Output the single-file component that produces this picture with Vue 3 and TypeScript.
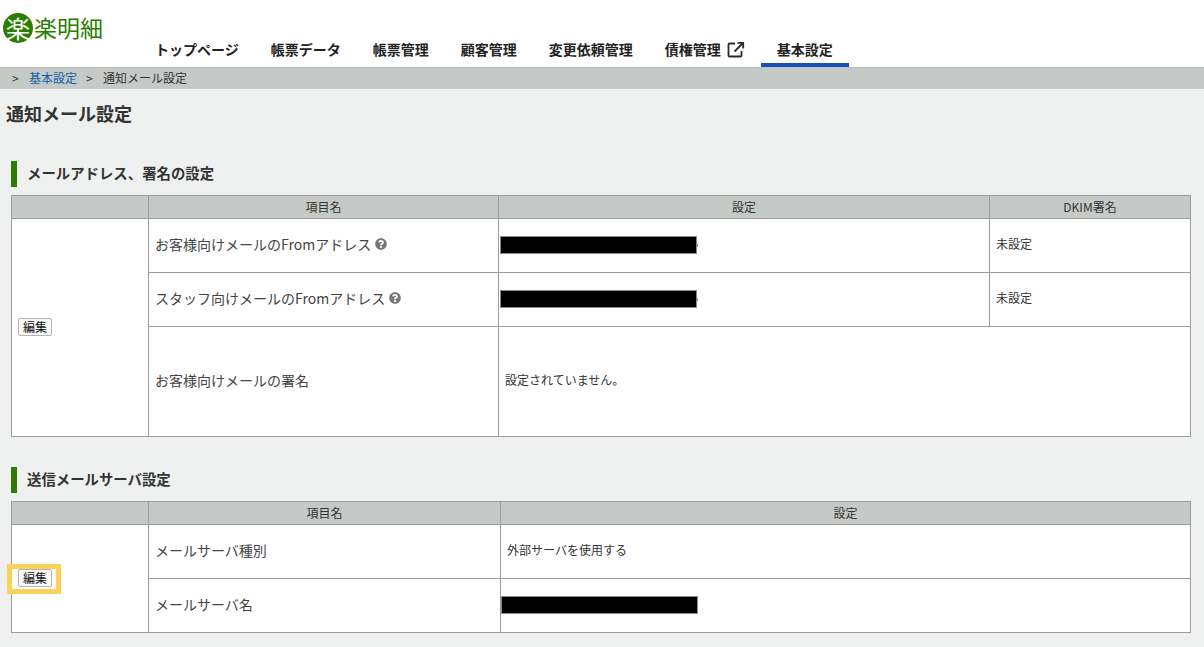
<script setup lang="ts">
const navItems: { label: string; external?: boolean; active?: boolean }[] = [
  { label: 'トップページ' },
  { label: '帳票データ' },
  { label: '帳票管理' },
  { label: '顧客管理' },
  { label: '変更依頼管理' },
  { label: '債権管理', external: true },
  { label: '基本設定', active: true },
]
const helpPath =
  'M504 256c0 137-111 248-248 248S8 393 8 256C8 119 119 8 256 8s248 111 248 248zM262.700 90c-54.500 0-89.300 23-116.600 63.800-3.500 5.300-2.400 12.400 2.700 16.200l34.700 26.300c5.200 3.900 12.600 3 16.700-2.100 17.900-22.700 30.100-35.800 57.300-35.800 20.400 0 45.700 13.100 45.700 33 0 15-12.400 22.700-32.500 34C247.100 238.500 216 254.900 216 296v4c0 6.600 5.400 12 12 12h56c6.600 0 12-5.400 12-12v-1.300c0-28.500 83.200-29.600 83.200-106.700 0-58-60.200-102-116.500-102zM256 338c-25.400 0-46 20.600-46 46s20.600 46 46 46 46-20.600 46-46-20.600-46-46-46z'
</script>

<template>
  <div class="page">
    <header class="header">
      <div class="logo">
        <span class="logo-mark">楽</span>
        <span class="logo-text">楽明細</span>
      </div>
      <nav class="nav">
        <a v-for="item in navItems" :key="item.label" class="nav-item" :class="{ active: item.active }">
          {{ item.label }}
          <svg v-if="item.external" class="ext" viewBox="0 0 18 18" fill="none" stroke="#2b2b2b" stroke-width="1.8">
            <path d="M8 2.500H2.500a1 1 0 0 0-1 1v11a1 1 0 0 0 1 1h11a1 1 0 0 0 1-1V10" />
            <path d="M7.500 10.500L15.500 2.500M10.500 1.800h5.700v5.700" />
          </svg>
        </a>
      </nav>
    </header>

    <div class="crumbs">
      <span class="sep">&gt;</span>
      <a class="crumb-link">基本設定</a>
      <span class="sep">&gt;</span>
      <span>通知メール設定</span>
    </div>

    <main class="main">
      <h1 class="title">通知メール設定</h1>

      <section class="section">
        <h2 class="heading">メールアドレス、署名の設定</h2>
        <table class="grid">
          <colgroup>
            <col class="c-action" />
            <col class="c-name" />
            <col class="c-value" />
            <col />
          </colgroup>
          <thead>
            <tr>
              <th></th>
              <th>項目名</th>
              <th>設定</th>
              <th>DKIM署名</th>
            </tr>
          </thead>
          <tbody>
            <tr class="row">
              <td rowspan="3" class="action"><button class="btn">編集</button></td>
              <td class="label">
                お客様向けメールのFromアドレス
                <svg class="help" viewBox="0 0 512 512"><path :d="helpPath" fill="#777" /></svg>
              </td>
              <td class="value masked"><span class="mask trail"></span></td>
              <td class="value">未設定</td>
            </tr>
            <tr class="row">
              <td class="label">
                スタッフ向けメールのFromアドレス
                <svg class="help" viewBox="0 0 512 512"><path :d="helpPath" fill="#777" /></svg>
              </td>
              <td class="value masked"><span class="mask trail"></span></td>
              <td class="value">未設定</td>
            </tr>
            <tr class="row-tall">
              <td class="label">お客様向けメールの署名</td>
              <td class="value" colspan="2">設定されていません。</td>
            </tr>
          </tbody>
        </table>
      </section>

      <section class="section">
        <h2 class="heading">送信メールサーバ設定</h2>
        <table class="grid">
          <colgroup>
            <col class="c-action" />
            <col class="c-name-wide" />
            <col />
          </colgroup>
          <thead>
            <tr>
              <th></th>
              <th>項目名</th>
              <th>設定</th>
            </tr>
          </thead>
          <tbody>
            <tr class="row">
              <td rowspan="2" class="action">
                <span class="marked">
                  <button class="btn">編集</button>
                  <span class="frame"></span>
                </span>
              </td>
              <td class="label">メールサーバ種別</td>
              <td class="value">外部サーバを使用する</td>
            </tr>
            <tr class="row">
              <td class="label">メールサーバ名</td>
              <td class="value masked"><span class="mask flush"></span></td>
            </tr>
          </tbody>
        </table>
      </section>
    </main>
  </div>
</template>

<style>
html,
body {
  margin: 0;
  background: #eff1f1;
}
</style>

<style scoped>
.page {
  font-family: 'Noto Sans CJK JP', 'Liberation Sans', sans-serif;
  color: #333;
  background: #eff1f1;
  height: 647px;
  overflow: hidden;
}
.header {
  position: relative;
  height: 67px;
  box-sizing: border-box;
  background: #fff;
  display: flex;
  align-items: flex-end;
  padding-left: 139px;
}
.logo {
  position: absolute;
  left: 3px;
  top: 13px;
  display: flex;
  align-items: center;
  gap: 1px;
  color: #2a7d00;
}
.logo-mark {
  width: 30px;
  height: 30px;
  border-radius: 50%;
  background: #2a7d00;
  color: #fff;
  font-size: 24px;
  line-height: 30px;
  text-align: center;
}
.logo-text {
  font-size: 23px;
  line-height: 30px;
  margin-top: -3px;
}
.nav {
  display: flex;
  height: 33px;
}
.nav-item {
  display: flex;
  align-items: center;
  padding: 0 16px;
  font-size: 14px;
  font-weight: 700;
  color: #222;
  border-bottom: 4px solid transparent;
  box-sizing: border-box;
  height: 33px;
  white-space: nowrap;
}
.nav-item.active {
  border-bottom-color: #1a4fbf;
}
.ext {
  width: 18px;
  height: 18px;
  margin: 3px 0 0 6px;
}
.crumbs {
  height: 22px;
  background: #c6cac7;
  border-top: 1px solid #bcbfbd;
  box-sizing: border-box;
  display: flex;
  align-items: center;
  padding: 0 0 2px 12px;
  font-size: 12px;
  color: #333;
}
.sep {
  width: 17px;
}
.crumb-link {
  color: #0b62a8;
  margin-right: 9px;
}
.main {
  padding: 10px 13px 0 11px;
}
.title {
  margin: 0 0 34px -5px;
  height: 28px;
  font-size: 18px;
  line-height: 28px;
  font-weight: 700;
  color: #333;
}
.section {
  margin-bottom: 30px;
}
.heading {
  margin: 0 0 8px;
  height: 26px;
  border-left: 6px solid #2a7d00;
  padding-left: 10px;
  font-size: 14.400px;
  line-height: 23px;
  font-weight: 700;
  color: #333;
}
.grid {
  width: 1180px;
  table-layout: fixed;
  border-collapse: collapse;
  background: #fff;
  font-size: 12px;
}
.c-action {
  width: 137px;
}
.c-name {
  width: 350px;
}
.c-value {
  width: 491px;
}
.c-name-wide {
  width: 352px;
}
th {
  height: 23px;
  padding: 0;
  box-sizing: border-box;
  background: #c6cac7;
  border: 1px solid #9c9c9c;
  font-weight: 400;
  font-size: 12px;
  line-height: 16px;
  color: #333;
  text-align: center;
}
td {
  border: 1px solid #9c9c9c;
  padding: 0 6px;
  line-height: 18px;
}
.row {
  height: 54px;
}
.row-tall {
  height: 110px;
}
.label {
  font-size: 14px;
  color: #444;
  padding-bottom: 4px;
}
.value {
  font-size: 12px;
  color: #333;
  padding-bottom: 4px;
}
.value.masked {
  padding: 0 0 2px;
}
.action {
  padding-bottom: 1px;
}
.help {
  width: 12px;
  height: 12px;
  margin-left: 1px;
  vertical-align: 0;
}
.mask {
  position: relative;
  display: block;
  width: 197px;
  height: 18px;
  box-sizing: border-box;
  margin-left: 1px;
  background: #000;
  border: 1px solid #8a8a8a;
}
.mask.flush {
  margin-left: 0;
}
.mask.trail::after {
  content: '';
  position: absolute;
  right: -2px;
  top: 7px;
  width: 1px;
  height: 3px;
  background: #6f9cc4;
}
.btn {
  display: block;
  width: 34px;
  height: 18px;
  padding: 0;
  font-family: inherit;
  font-size: 12px;
  line-height: 14px;
  color: #111;
  background: #f8f8f8;
  border: 1px solid #b5b5b5;
  border-radius: 2px;
}
.marked {
  position: relative;
  display: block;
  width: 34px;
}
.frame {
  position: absolute;
  left: -11px;
  top: -5px;
  width: 54px;
  height: 30px;
  box-sizing: border-box;
  border: 5px solid #fbd35a;
}
</style>
